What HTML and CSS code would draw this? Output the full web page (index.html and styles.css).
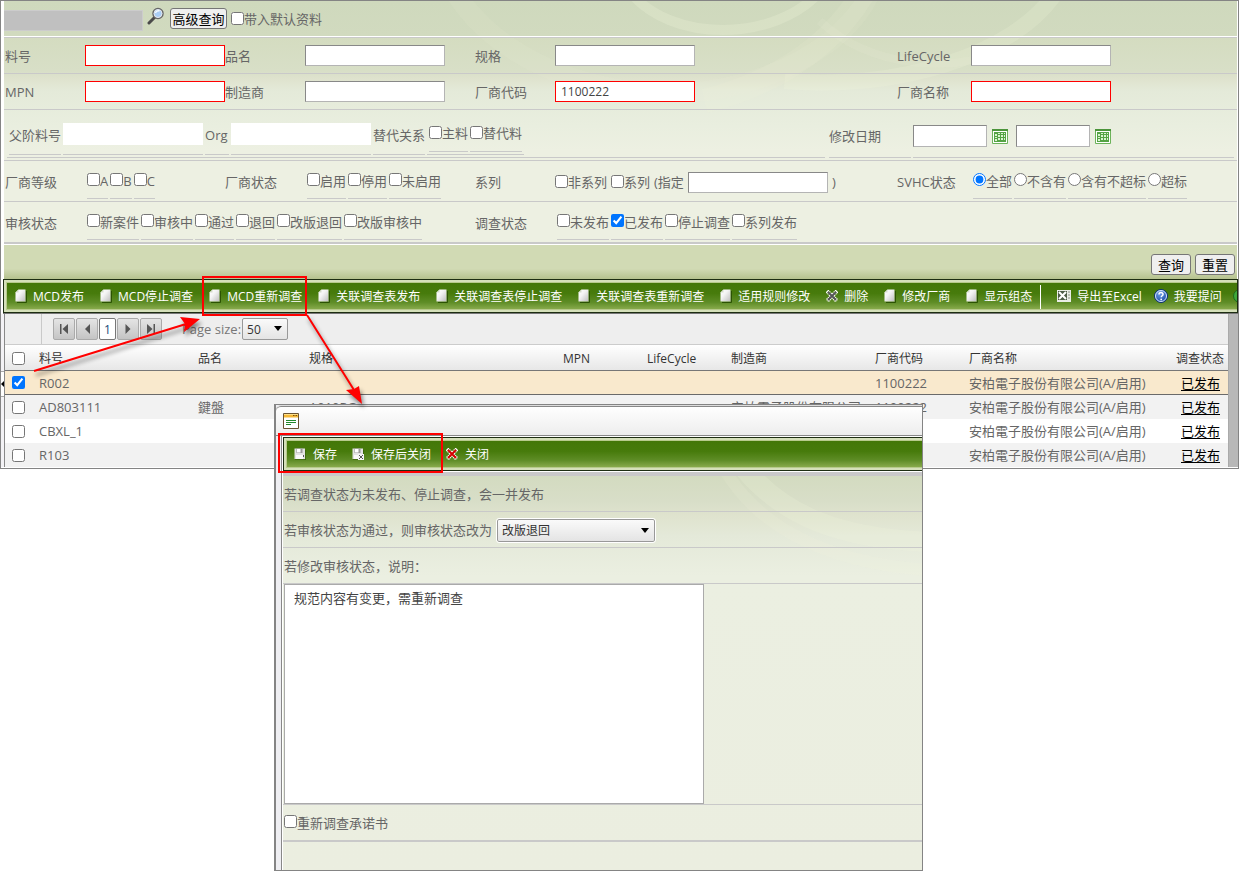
FILE: index.html
```html
<!DOCTYPE html>
<html lang="zh-CN">
<head>
<meta charset="utf-8">
<title>MCD重新调查</title>
<link rel="stylesheet" href="styles.css">
</head>
<body>
<svg class="sprite" aria-hidden="true">
  <defs>
    <linearGradient id="paper" x1="0" y1="0" x2="1" y2="1"><stop offset="0" stop-color="#fff"/><stop offset=".4" stop-color="#f4f4f4"/><stop offset="1" stop-color="#bdbdbd"/></linearGradient>
    <radialGradient id="blue" cx=".4" cy=".3" r=".8"><stop offset="0" stop-color="#6fa0e8"/><stop offset="1" stop-color="#103f9c"/></radialGradient>
  </defs>
  <symbol id="i-doc" viewBox="0 0 12 14"><path d="M2 13.500h9.500V2" fill="none" stroke="#2c5204"/><path d="M3.500 .5H10.500V12.500H.5V3.500z" fill="url(#paper)"/><path d="M3.500 .5V3.500H.5z" fill="#d5dccb"/></symbol>
  <symbol id="i-x" viewBox="0 0 12 12"><path d="M1 1l10 10M11 1l-10 10" stroke="#fff" stroke-width="4" stroke-dasharray="1.400 .6"/><path d="M2 2l8 8M10 2l-8 8" stroke="currentColor" stroke-width="2"/></symbol>
  <symbol id="i-save" viewBox="0 0 12 12"><path d="M1 12h11V2" fill="none" stroke="#2c5204"/><path d="M.5 .5h10.500v10.500H.5z" fill="#e2e2e2"/><path d="M2.500 .5h6v4.500h-6z" fill="#999"/><path d="M3 1h3.500v3.500H3z" fill="#fff"/><path d="M2 7h7v4H2z" fill="#fafafa"/><path d="M9 7h1v2H9z" fill="#555"/></symbol>
  <symbol id="i-cal" viewBox="0 0 16 16"><path d="M.5 1.500h15v14H.5z" fill="#fff" stroke="#6db35a"/><path d="M0 1h16v2H0z" fill="#4b943a"/><path d="M2 4h12v10H2z" fill="#55a345"/><path d="M3 6h2v2H3zM6 5h2v1H6zM9 5h2v1H9zM12 5h1v1h-1zM6 7h2v2H6zM9 7h2v2H9zM12 7h1v2h-1zM3 9h2v1H3zM3 11h2v2H3zM6 10h2v2H6zM9 10h2v2H9zM12 10h1v2h-1z" fill="#d9f5cf"/></symbol>
</svg>

<div class="stage">
  <main class="page">
    <div class="query">
      <svg class="swirl" viewBox="0 0 1232 244" preserveAspectRatio="none" aria-hidden="true">
        <g fill="none" stroke="#f3f8df">
          <path d="M625 -10C665 42 770 42 816 -10" stroke-width="10" opacity=".24"/>
          <path d="M450 -10C510 90 700 135 826 40C850 20 860 5 866 -10" stroke-width="20" opacity=".09"/>
          <path d="M780 80C890 90 1010 55 1052 -10" stroke-width="16" opacity=".18"/>
          <path d="M700 100C780 80 830 40 860 -10" stroke-width="24" opacity=".11"/>
          <path d="M815 20C870 70 950 70 1000 50" stroke-width="8" opacity=".1"/>
        </g>
      </svg>
      <div class="top">
        <input class="site" type="text" aria-label="查询名称" disabled>
        <svg class="lens" viewBox="0 0 18 18" aria-hidden="true"><path d="M2 16l6-6" stroke="#4a4a4a" stroke-width="3" stroke-linecap="round"/><circle cx="11" cy="6.500" r="5" fill="#a9cdf5" stroke="#666" stroke-width="1.500"/><circle cx="11" cy="6.500" r="4" fill="none" stroke="#e6e9ee"/><path d="M8.500 6a3 3 0 0 1 4-2" fill="none" stroke="#f4faff" stroke-width="1.500"/></svg>
        <button class="btn" type="button">高级查询</button>
        <label class="opt"><input type="checkbox">带入默认资料</label>
      </div>

      <div class="row grid">
        <label for="a1">料号</label><input id="a1" class="box red" type="text">
        <label for="a2">品名</label><input id="a2" class="box" type="text">
        <label for="a3">规格</label><input id="a3" class="box" type="text">
        <label for="a4">LifeCycle</label><input id="a4" class="box" type="text">
      </div>
      <div class="row grid">
        <label for="b1">MPN</label><input id="b1" class="box red" type="text">
        <label for="b2">制造商</label><input id="b2" class="box" type="text">
        <label for="b3">厂商代码</label><input id="b3" class="box red" type="text" value="1100222">
        <label for="b4">厂商名称</label><input id="b4" class="box red" type="text">
      </div>
      <div class="row parent">
        <div class="outer wide">
          <label class="cell" for="c1">父阶料号</label>
          <span class="cell"><input id="c1" class="plain" type="text"></span>
          <label class="cell org" for="c2">Org</label>
          <span class="cell"><input id="c2" class="plain" type="text"></span>
          <span class="cell">替代关系</span>
          <span class="cell pair">
            <label class="opt"><input type="checkbox">主料</label>
            <label class="opt"><input type="checkbox">替代料</label>
          </span>
        </div>
        <div class="outer date-label">修改日期</div>
        <div class="outer dates">
          <input class="box date" type="text" aria-label="修改日期起"><svg class="cal" aria-hidden="true"><use href="#i-cal"/></svg>
          <input class="box date" type="text" aria-label="修改日期止"><svg class="cal" aria-hidden="true"><use href="#i-cal"/></svg>
        </div>
      </div>
      <div class="row grid tall">
        <span>厂商等级</span>
        <div class="opts"><label class="opt"><input type="checkbox">A</label><label class="opt"><input type="checkbox">B</label><label class="opt"><input type="checkbox">C</label></div>
        <span>厂商状态</span>
        <div class="opts"><label class="opt"><input type="checkbox">启用</label><label class="opt"><input type="checkbox">停用</label><label class="opt"><input type="checkbox">未启用</label></div>
        <span>系列</span>
        <div class="series"><label class="opt"><input type="checkbox">非系列</label><label class="opt"><input type="checkbox">系列</label><label for="d1">(指定</label><input id="d1" class="box" type="text"><span>)</span></div>
        <span>SVHC状态</span>
        <div class="opts"><label class="opt"><input type="radio" name="svhc" checked>全部</label><label class="opt"><input type="radio" name="svhc">不含有</label><label class="opt"><input type="radio" name="svhc">含有不超标</label><label class="opt"><input type="radio" name="svhc">超标</label></div>
      </div>
      <div class="row grid tall last">
        <span>审核状态</span>
        <div class="opts span3"><label class="opt"><input type="checkbox">新案件</label><label class="opt"><input type="checkbox">审核中</label><label class="opt"><input type="checkbox">通过</label><label class="opt"><input type="checkbox">退回</label><label class="opt"><input type="checkbox">改版退回</label><label class="opt"><input type="checkbox">改版审核中</label></div>
        <span>调查状态</span>
        <div class="opts span3"><label class="opt"><input type="checkbox">未发布</label><label class="opt"><input type="checkbox" checked>已发布</label><label class="opt"><input type="checkbox">停止调查</label><label class="opt"><input type="checkbox">系列发布</label></div>
      </div>
      <div class="actions">
        <button class="btn" type="button">查询</button>
        <button class="btn" type="button">重置</button>
      </div>
    </div>

    <div class="toolbar">
      <div class="tools">
        <button type="button"><svg class="doc"><use href="#i-doc"/></svg>MCD发布</button>
        <button type="button"><svg class="doc"><use href="#i-doc"/></svg>MCD停止调查</button>
        <button type="button"><svg class="doc"><use href="#i-doc"/></svg>MCD重新调查</button>
        <button type="button"><svg class="doc"><use href="#i-doc"/></svg>关联调查表发布</button>
        <button type="button"><svg class="doc"><use href="#i-doc"/></svg>关联调查表停止调查</button>
        <button type="button"><svg class="doc"><use href="#i-doc"/></svg>关联调查表重新调查</button>
        <button type="button"><svg class="doc"><use href="#i-doc"/></svg>适用规则修改</button>
        <button type="button"><svg class="cross"><use href="#i-x"/></svg>删除</button>
        <button type="button"><svg class="doc"><use href="#i-doc"/></svg>修改厂商</button>
        <button type="button"><svg class="doc"><use href="#i-doc"/></svg>显示组态</button>
        <span class="sep"></span>
        <button type="button"><svg class="big" viewBox="0 0 14 14"><path d="M0 1h14v12H0z" fill="#e9ece6"/><path d="M1 2h9v9H1z" fill="#4c5b46"/><path d="M2 3l7 7M9 3l-7 7" stroke="#fff" stroke-width="2"/><path d="M11 3h2M11 6h2M11 9h2" stroke="#8b9286"/></svg>导出至Excel</button>
        <button type="button" class="help"><svg class="big" viewBox="0 0 14 14"><circle cx="7" cy="7" r="6.500" fill="url(#blue)" stroke="#0d3273"/><circle cx="7" cy="7" r="5.500" fill="none" stroke="#d5e3fa"/><path d="M5 5.500C5 3 9.200 3 9 5.400C9 6.800 7.200 6.700 7.200 8.300" fill="none" stroke="#fff" stroke-width="1.500"/><circle cx="7.200" cy="10.400" r=".9" fill="#fff"/></svg>我要提问</button>
        <button type="button" class="more" aria-label="更多"><svg class="big" viewBox="0 0 14 14"><circle cx="7" cy="7" r="6.500" fill="#3fa83a" stroke="#1c6a1c"/></svg></button>
      </div>
    </div>

    <div class="listing">
      <div class="handle" aria-hidden="true"><svg viewBox="0 0 3 6"><path d="M3 0v6L0 3z"/></svg></div>
      <div class="content">
        <div class="pager">
          <button type="button" aria-label="首页"><svg viewBox="0 0 10 10"><path d="M1 0v10h1.500V0zM9 0v10L3.500 5z"/></svg></button>
          <button type="button" aria-label="上一页"><svg viewBox="0 0 10 10"><path d="M8 0v10L3 5z"/></svg></button>
          <button type="button" class="current">1</button>
          <button type="button" aria-label="下一页"><svg viewBox="0 0 10 10"><path d="M2.500 0v10l5-5z"/></svg></button>
          <button type="button" aria-label="末页"><svg viewBox="0 0 10 10"><path d="M1 0v10l5.500-5zM7.500 0v10H9V0z"/></svg></button>
          <label for="size">Page size:</label>
          <span class="drop"><select id="size"><option>50</option></select><svg viewBox="0 0 8 5"><path d="M0 0h8L4 5z"/></svg></span>
        </div>
        <table>
          <colgroup><col class="w-check"><col class="w-no"><col class="w-name"><col class="w-spec"><col class="w-84"><col class="w-84"><col class="w-maker"><col class="w-code"><col><col class="w-state"></colgroup>
          <thead><tr><th><input type="checkbox" aria-label="全选"></th><th>料号</th><th>品名</th><th>规格</th><th>MPN</th><th>LifeCycle</th><th>制造商</th><th>厂商代码</th><th>厂商名称</th><th>调查状态</th></tr></thead>
          <tbody>
            <tr class="picked"><td><input type="checkbox" aria-label="R002" checked></td><td>R002</td><td></td><td></td><td></td><td></td><td></td><td>1100222</td><td>安柏電子股份有限公司(A/启用)</td><td><a href="#">已发布</a></td></tr>
            <tr class="alt"><td><input type="checkbox" aria-label="AD803111"></td><td>AD803111</td><td>鍵盤</td><td>A010PG</td><td></td><td></td><td>安柏電子股份有限公司</td><td>1100222</td><td>安柏電子股份有限公司(A/启用)</td><td><a href="#">已发布</a></td></tr>
            <tr><td><input type="checkbox" aria-label="CBXL_1"></td><td>CBXL_1</td><td></td><td></td><td></td><td></td><td></td><td></td><td>安柏電子股份有限公司(A/启用)</td><td><a href="#">已发布</a></td></tr>
            <tr class="alt"><td><input type="checkbox" aria-label="R103"></td><td>R103</td><td></td><td></td><td></td><td></td><td></td><td></td><td>安柏電子股份有限公司(A/启用)</td><td><a href="#">已发布</a></td></tr>
          </tbody>
        </table>
      </div>
      <div class="scroll"></div>
    </div>
  </main>

  <section class="dialog" role="dialog" aria-label="MCD重新调查">
    <header>
      <svg viewBox="0 0 16 16" aria-hidden="true"><path d="M.5 .5h15v15H.5z" fill="#fff" stroke="#6b5331"/><path d="M1 1h14v3.500H1z" fill="#f5b836"/><path d="M1 1h14v1H1z" fill="#fde08a"/><path d="M10 2.500h1.500M12.500 2.500H14" stroke="#7a4f08"/><path d="M3 7.500h10M3 9.500h10M3 11.500h5" stroke="#23882a"/></svg>
    </header>
    <div class="inner">
      <div class="toolbar">
        <div class="tools">
          <button type="button"><svg class="cross"><use href="#i-save"/></svg>保存</button>
          <button type="button"><svg class="cross" viewBox="0 0 12 12"><use href="#i-save"/><path d="M6 6h6v6H6z" fill="#f4f4f4"/><path d="M7 7l4 4M11 7l-4 4" stroke="#555"/></svg>保存后关闭</button>
          <button type="button"><svg class="cross danger"><use href="#i-x"/></svg>关闭</button>
        </div>
      </div>
      <div class="form">
        <svg class="swirl" viewBox="0 0 640 120" preserveAspectRatio="none" aria-hidden="true"><g fill="none" stroke="#f3f8df"><path d="M460 -10C500 40 560 65 660 66" stroke-width="20" opacity=".18"/><path d="M440 -10C480 60 560 90 660 95" stroke-width="12" opacity=".12"/></g></svg>
        <div class="line">若调查状态为未发布、停止调查，会一并发布</div>
        <div class="line"><label for="state">若审核状态为通过，则审核状态改为</label><span class="drop state"><select id="state"><option>改版退回</option></select><svg viewBox="0 0 8 5"><path d="M0 0h8L4 5z"/></svg></span></div>
        <div class="line"><label for="note">若修改审核状态，说明：</label></div>
        <div class="note"><textarea id="note">规范内容有变更，需重新调查</textarea></div>
        <div class="line promise"><label class="opt"><input type="checkbox">重新调查承诺书</label></div>
        <div class="rest"></div>
      </div>
    </div>
  </section>

  <svg class="marks" width="460" height="480" viewBox="0 0 460 480" aria-hidden="true">
    <g fill="none" stroke="#f00" stroke-width="2"><path d="M203 277h103v38H203zM279 434h163v38H279z"/></g>
    <g class="arrows" stroke="#f00" fill="#f00">
      <path d="M34 371L186 324M307 315L354 390" fill="none" stroke-width="2"/>
      <path d="M200 319l-20-2 5 7-1 8zM362 404l-3-18-5 3-8 1z" stroke="none"/>
    </g>
  </svg>
</div>
</body>
</html>
```

FILE: styles.css
```css
* { box-sizing: border-box; }
body {
  margin: 0;
  background: #fff;
  color: #666;
  font: 13px/18px "Open Sans", "Noto Sans CJK SC", sans-serif;
}
input, button, select, textarea { font-family: inherit; }
input[type="checkbox"], input[type="radio"] { width: 13px; height: 13px; margin: 0; flex: none; }
.sprite { position: absolute; width: 0; height: 0; }

/* the dialog shares one grid cell with the page and lies over it */
.stage { position: relative; display: grid; grid-template-columns: minmax(0, 1fr); align-items: start; min-height: 100vh; }
.page, .dialog { grid-area: 1 / 1; }

.page { margin-right: 1px; border: 1px solid #848484; padding-bottom: 1px; }

/* query panel */
.query {
  position: relative;
  margin: 0 1px 0 3px;
  background: linear-gradient(#cfd9bd 0, #d1dabf 35px, #d4dcc0 36px, #d8dfc7 70px, #dfe3ce 78px, #e4ead9 90px, #e9eedf 125px, #edf0e2 150px, #edf0e2 100%);
}
.swirl { position: absolute; inset: 0; width: 100%; height: 244px; }
.query > div, .form > div { position: relative; }
.top { display: flex; align-items: center; height: 37px; border-bottom: 1px solid #c9c9c9; box-shadow: inset 0 -1px #fff; }
.site { width: 139px; height: 21px; border: 1px solid #ccc; border-left: 0; background: #c0c0c0; margin: 2px 4px 0 0; }
.lens { width: 18px; height: 18px; margin: 0 5px 7px 0; }
.btn { height: 21px; border: 1px solid #767676; border-radius: 3px; background: #efefef; color: #000; font-size: 13px; line-height: 18px; padding: 0 1px; }
.top .btn { width: 57px; margin: 0 4px 1px 0; }
.opt { display: inline-flex; align-items: center; white-space: nowrap; }
.opt input { margin-bottom: 2px; }

.row { border-bottom: 1px solid #c9c9c9; padding: 0 0 0 1px; }
.grid { display: grid; grid-template-columns: 80px 140px 80px 170px 80px minmax(280px, 1fr) 74px 266px; align-items: center; min-height: 36px; }
.box { width: 140px; height: 21px; border: 1px solid #aaa; border-color: #888 #b4b4b4 #b4b4b4 #888; background: #fff; color: #444; font-size: 12px; padding: 0 5px; }
.box.red { border: 1px solid #f00; }
.tall { min-height: 41px; }
.tall > span { padding-top: 2px; }
.tall.last { min-height: 42px; border-bottom: 2px solid #c9c9c9; }
.opts { display: flex; gap: 2px; padding-left: 2px; }
.opts .opt { height: 35px; border-bottom: 1px solid #c9c9c9; }
.span3 { grid-column: span 3; }
.series { display: flex; align-items: center; gap: 4px; padding-top: 2px; }

.parent { display: flex; gap: 4px; height: 51px; padding: 0 3px; align-items: flex-start; }
.outer { display: flex; align-items: center; height: 48px; border-bottom: 1px solid #c9c9c9; padding-top: 4px; }
.wide { flex: 1; gap: 2px; padding: 0 0 0 2px; }
.org { width: 24px; }
.date-label { width: 82px; }
.dates { width: 321px; margin-left: -2px; }
.date { width: 74px; height: 22px; }
.cal { width: 16px; height: 16px; margin: 0 8px 0 5px; }
.cell { display: flex; align-items: center; height: 42px; border-bottom: 1px solid #c9c9c9; padding-top: 3px; }
.plain { width: 140px; height: 22px; border: 0; background: #fff; padding: 0 6px; margin-bottom: 2px; }
.pair { gap: 2px; padding: 0 2px; align-items: flex-start; }
.pair .opt { height: 39px; border-bottom: 1px solid #c9c9c9; padding-top: 3px; }

.actions { display: flex; justify-content: flex-end; gap: 4px; height: 35px; padding: 9px 2px 0; border-top: 1px solid #fff; background: linear-gradient(#d1dab4 70%, #b5c18e); }
.actions .btn { width: 40px; }

/* toolbars */
.toolbar { border: 1px solid #1d2d12; background: #d5e0ba; padding: 2px; }
.page > .toolbar { margin: 0 0 0 2px; padding-right: 0; box-shadow: 0 1px #777; }
.tools { display: flex; align-items: center; gap: 16px; height: 28px; overflow: hidden; padding: 1px 0 0 8px; border: 1px solid #b7ca8c; background: linear-gradient(#437708, #477b0c 40%, #5f8d27 75%, #87aa4b); }
.page > .toolbar .tools { border-right: 0; }
.tools button { display: flex; align-items: center; flex: none; gap: 6px; border: 0; padding: 0; background: none; color: #fff; font-size: 12px; line-height: 18px; }
.tools svg { flex: none; color: #555; margin-bottom: 2px; }
.tools .doc { width: 12px; height: 14px; }
.tools .cross { width: 12px; height: 12px; }
.tools .danger { color: #d40000; }
.tools .big { width: 14px; height: 14px; }
.sep { flex: none; width: 1px; height: 24px; background: #fff; margin-left: -8px; }
.tools .help { margin-left: -4px; }
.tools .more { margin-left: -5px; }

/* list */
.listing { display: flex; background: #f3f2f5; margin-top: 1px; }
.handle { width: 3px; height: 26px; margin-top: 57px; border: solid #aaa; border-width: 1px 0; display: flex; align-items: center; background: #fff; }
.handle svg { width: 3px; height: 6px; }
.content { flex: 1; min-width: 0; border-left: 1px solid #888; }
.scroll { width: 10px; background: #b8b8b8; border-left: 1px solid #aaa; }
.pager { display: flex; align-items: center; gap: 1px; height: 30px; padding-left: 48px; background: linear-gradient(#c9c9c9, #c9c9c9) 36px 0 / 1px 100% no-repeat #eee; }
.pager button { display: grid; place-items: center; width: 22px; height: 22px; padding: 0; border: 1px solid #aaa; border-radius: 2px; background: linear-gradient(#e4e4e4, #c4c4c4); color: #222; }
.pager button svg { width: 10px; height: 10px; fill: #555; }
.pager .current { width: 17px; background: #fff; border-color: #777; font-size: 12px; color: #204a78; }
.pager label { margin: 0 0 0 19px; color: #777; }
.drop { position: relative; display: inline-flex; }
.drop select { appearance: none; width: 46px; height: 22px; border: 1px solid #999; border-radius: 2px; background: linear-gradient(#fafafa, #e4e4e4); color: #333; font-size: 12px; padding: 0 4px; }
.drop svg { position: absolute; right: 6px; top: 8px; width: 8px; height: 5px; pointer-events: none; }
table { width: 100%; table-layout: fixed; border-collapse: separate; border-spacing: 0; border-top: 1px solid #ccc; }
.w-check { width: 34px; } .w-no { width: 159px; } .w-name { width: 111px; } .w-spec { width: 254px; }
.w-84 { width: 84px; } .w-maker { width: 144px; } .w-code { width: 94px; } .w-state { width: 52px; }
th, td { padding: 0; text-align: left; white-space: nowrap; font-weight: 400; }
th { height: 26px; padding-top: 2px; color: #333; font-size: 12px; background: linear-gradient(#fff, #e7e7e7); border-bottom: 1px solid #777; }
td { height: 24px; background: #fff; }
.alt td { background: #f2f2f2; }
.picked td { background: #f9e9cd; border-bottom: 1px solid #6a6a6a; }
th:first-child, td:first-child { padding-left: 7px; }
th input, td input { display: block; }
td:last-child { padding-left: 5px; }
td a { color: #000; text-decoration: underline; text-underline-offset: 2px; }

/* dialog */
.dialog { position: relative; width: 649px; margin: 404px 0 19px 274px; border: 1px solid #848484; border-left-width: 2px; background: #eeeef2; }
.dialog header { height: 31px; padding: 7px; border-top: 1px solid #ddd; border-bottom: 1px solid #888; background: linear-gradient(#fff, #ededed); border-radius: 5px 0 0; box-shadow: inset 0 1px #888; }
.dialog header svg { display: block; width: 16px; height: 16px; }
.inner { margin-left: 5px; border-left: 1px solid #888; background: #fff; padding: 1px 0 0 1px; }
.dialog .toolbar { border-right: 0; padding-right: 0; }
.dialog .tools { border-right: 0; padding-left: 7px; gap: 15px; }
.dialog .tools button { gap: 7px; }
.form { position: relative; margin-top: 1px; border-top: 4px solid #c9c8c9; background: linear-gradient(#d3dbc0 0, #d8dec8 25px, #dfe3ce 40px, #e4e9d9 60px, #ebefe1 100px, #ebeee0 100%); }
.form .swirl { height: 120px; }
.line { display: flex; align-items: center; height: 36px; padding-left: 1px; border-bottom: 1px solid #c9c9c9; }
.state { margin: 2px 0 0 5px; }
.drop.state select { width: 158px; height: 23px; border: 1px solid #999; outline: 1px solid #fff; }
.drop.state svg { top: 9px; }
.note { padding-left: 1px; border-bottom: 1px solid #c9c9c9; }
textarea { display: block; resize: none; width: 420px; height: 220px; border: 1px solid #aaa; padding: 4px 9px; background: #fff; color: #444; font-size: 13px; line-height: 18px; }
.promise { height: 37px; border-bottom: 2px solid #c9c9c9; }
.rest { height: 28px; }

.marks { position: absolute; left: 0; top: 0; pointer-events: none; }
.arrows { filter: drop-shadow(2px 4px 2px #0007); }
```
